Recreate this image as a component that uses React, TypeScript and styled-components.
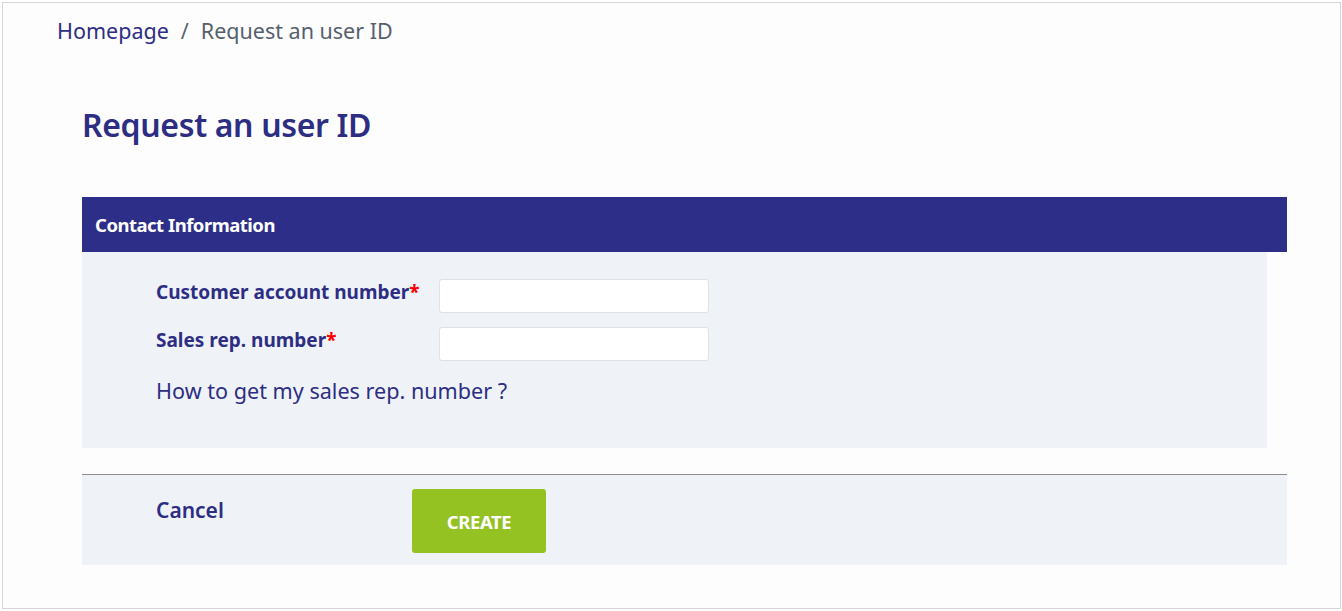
import React from 'react'
import styled, { createGlobalStyle } from 'styled-components'

const GlobalStyle = createGlobalStyle`
  html, body {
    margin: 0;
    padding: 0;
    background: #ffffff;
    font-family: 'Noto Sans', 'Open Sans', Arial, sans-serif;
  }
`

const App = () => {
  return (
    <>
      <GlobalStyle />
      <Frame>
        <Breadcrumb>
          <CrumbLink href="#">Homepage</CrumbLink>
          <CrumbSep>/</CrumbSep>
          <CrumbCurrent>Request an user ID</CrumbCurrent>
        </Breadcrumb>

        <Content>
          <Title>Request an user ID</Title>

          <PanelHeader>Contact Information</PanelHeader>
          <PanelBody>
            <FieldRow>
              <Label>
                Customer account number<Required>*</Required>
              </Label>
              <Input type="text" />
            </FieldRow>
            <FieldRow>
              <Label>
                Sales rep. number<Required>*</Required>
              </Label>
              <Input type="text" />
            </FieldRow>
            <HelpLink href="#">How to get my sales rep. number ?</HelpLink>
          </PanelBody>

          <Footer>
            <CancelLink href="#">Cancel</CancelLink>
            <CreateButton type="button">CREATE</CreateButton>
          </Footer>
        </Content>
      </Frame>
    </>
  )
}

export default App

const Frame = styled.div`
  margin: 2px 1px 0 2px;
  height: 605px;
  border: 1px solid #d6d6d6;
  background: #fdfdfd;
  box-sizing: content-box;
`

const Breadcrumb = styled.nav`
  display: flex;
  align-items: center;
  padding: 14px 0 0 54px;
  height: 28px;
  font-size: 21.5px;
  line-height: 28px;
`

const CrumbLink = styled.a`
  color: #2d2e83;
  text-decoration: none;
`

const CrumbSep = styled.span`
  color: #5a6470;
  margin: 0 12px;
`

const CrumbCurrent = styled.span`
  color: #55606c;
`

const Content = styled.div`
  padding: 0 53px 0 79px;
`

const Title = styled.h1`
  margin: 58px 0 0 0;
  height: 94px;
  font-size: 32px;
  line-height: 44px;
  font-weight: 600;
  color: #2d2e83;
  letter-spacing: -0.35px;
`

const PanelHeader = styled.div`
  display: flex;
  align-items: center;
  height: 55px;
  padding: 0 13px;
  background: #2d2e87;
  color: #ffffff;
  font-size: 18.5px;
  font-weight: 700;
  letter-spacing: -0.5px;
`

const PanelBody = styled.div`
  display: flex;
  flex-direction: column;
  margin-right: 20px;
  height: 196px;
  padding: 27px 0 0 74px;
  box-sizing: border-box;
  background: #eff3f8;
`

const FieldRow = styled.div`
  display: grid;
  grid-template-columns: 283px 270px;
  align-items: start;
  height: 48px;
`

const Label = styled.label`
  font-size: 19px;
  font-weight: 700;
  color: #2d2e83;
  line-height: 26px;
`

const Required = styled.span`
  color: #ff0000;
`

const Input = styled.input`
  width: 270px;
  height: 34px;
  box-sizing: border-box;
  border: 1px solid #dfe1e5;
  border-radius: 3px;
  background: #ffffff;
  outline: none;
  font-family: inherit;
  font-size: 16px;
`

const HelpLink = styled.a`
  margin-top: 2px;
  font-size: 21.6px;
  line-height: 28px;
  color: #2d2e83;
  text-decoration: none;
`

const Footer = styled.div`
  display: flex;
  align-items: flex-start;
  margin-top: 26px;
  height: 91px;
  padding: 14px 0 0 74px;
  box-sizing: border-box;
  border-top: 1px solid #8d8d8d;
  background: #eff3f8;
`

const CancelLink = styled.a`
  width: 256px;
  margin-top: 7px;
  font-size: 21px;
  font-weight: 600;
  line-height: 28px;
  color: #2d2e83;
  text-decoration: none;
`

const CreateButton = styled.button`
  width: 134px;
  height: 64px;
  border: none;
  border-radius: 3px;
  background: #95c223;
  color: #ffffff;
  font-family: inherit;
  font-size: 18.5px;
  font-weight: 700;
  letter-spacing: -0.4px;
  cursor: pointer;
`
